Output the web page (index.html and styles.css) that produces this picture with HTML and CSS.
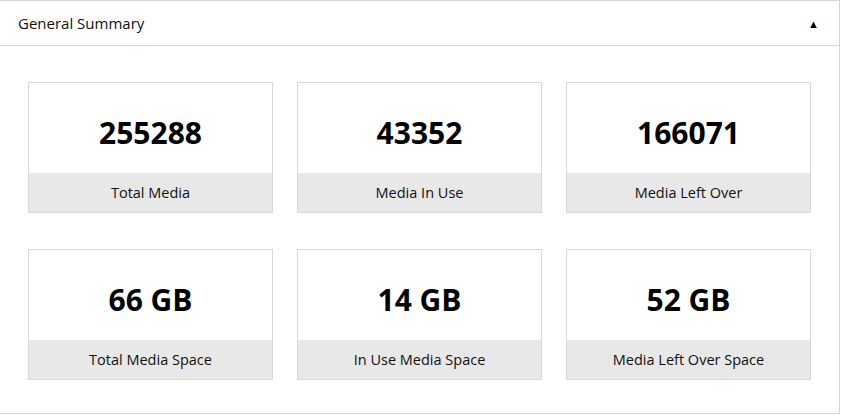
FILE: index.html
```html
<!DOCTYPE html>
<html>
<head>
<meta charset="utf-8">
<link rel="stylesheet" href="styles.css">
</head>
<body>
<div class="panel">
  <div class="panel-header">
    <h2 class="panel-title">General Summary</h2>
    <span class="toggle">&#9650;</span>
  </div>
  <div class="panel-body">
    <div class="grid">
      <div class="card"><div class="value">255288</div><div class="label">Total Media</div></div>
      <div class="card"><div class="value">43352</div><div class="label">Media In Use</div></div>
      <div class="card"><div class="value">166071</div><div class="label">Media Left Over</div></div>
      <div class="card"><div class="value">66 GB</div><div class="label">Total Media Space</div></div>
      <div class="card"><div class="value">14 GB</div><div class="label">In Use Media Space</div></div>
      <div class="card"><div class="value">52 GB</div><div class="label">Media Left Over Space</div></div>
    </div>
  </div>
</div>
</body>
</html>
```
FILE: styles.css
```css
* { box-sizing: border-box; }
body {
  margin: 0;
  background: #fff;
  font-family: "Open Sans", "Noto Sans", sans-serif;
  color: #1a1a1a;
}
.panel {
  width: 841px;
  height: 414px;
  margin-left: -1px;
  border: 1px solid #d5d5d5;
  background: #fff;
}
.panel-header {
  height: 45px;
  border-bottom: 1px solid #d5d5d5;
  display: flex;
  align-items: center;
  justify-content: space-between;
  padding: 0 20px 0 18px;
}
.panel-title {
  margin: 0;
  font-size: 15px;
  font-weight: 400;
  color: #111;
}
.toggle {
  font-size: 11px;
  color: #000;
}
.panel-body {
  padding: 36px 29px 0 28px;
}
.grid {
  display: grid;
  grid-template-columns: repeat(3, 245px);
  column-gap: 24px;
  row-gap: 36px;
}
.card {
  border: 1px solid #d8d8d8;
  height: 131px;
  display: flex;
  flex-direction: column;
}
.value {
  height: 90px;
  display: flex;
  align-items: center;
  justify-content: center;
  font-size: 30px;
  font-weight: 700;
  color: #000;
  padding-top: 8px;
}
.label {
  flex: 1;
  background: #e8e8e8;
  display: flex;
  align-items: center;
  justify-content: center;
  font-size: 14.5px;
  font-weight: 400;
  color: #111;
}
```
